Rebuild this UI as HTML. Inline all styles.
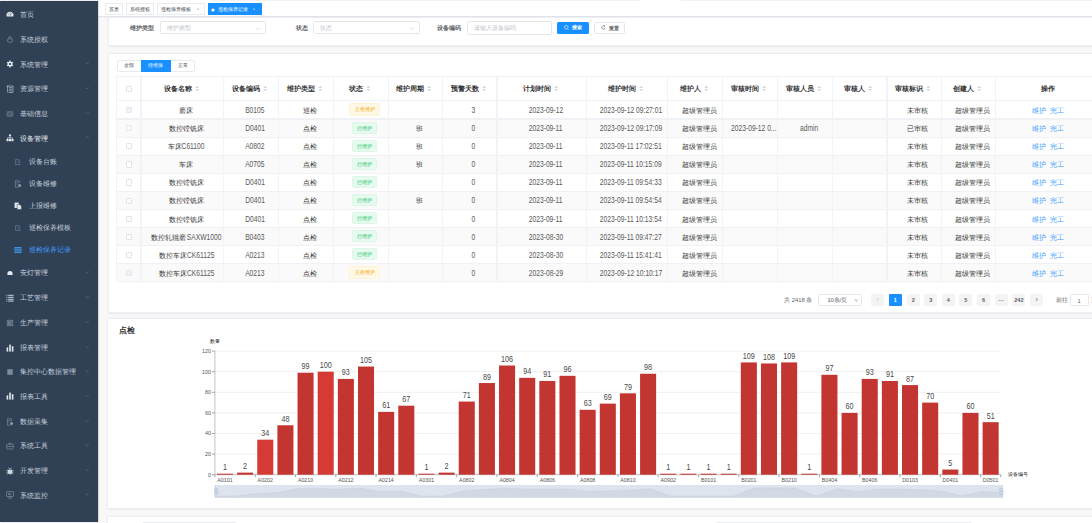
<!DOCTYPE html><html><head><meta charset="utf-8"><style>
*{box-sizing:border-box;margin:0;padding:0}
html,body{width:1092px;height:523px;overflow:hidden;background:#fff;font-family:"Liberation Sans",sans-serif;position:relative}
.abs{position:absolute}
#side{position:absolute;left:0;top:1px;width:98.3px;height:520.5px;background:#304156;z-index:5;box-shadow:0.5px 0 1.5px rgba(0,21,41,0.35)}
.mi{position:absolute;left:0;width:98px;height:20px;line-height:20px;color:#c6d0dc;font-size:7px;white-space:nowrap}
.mi .t{position:absolute;left:20px;top:0}
.mi.sub .t{left:28.8px}
.mi .ar{position:absolute;left:85.5px;top:8.3px;width:2.6px;height:2.6px;border-right:0.5px solid #5f6d80;border-bottom:0.5px solid #5f6d80;transform:rotate(45deg)}
.mi .ar.up{transform:rotate(-135deg);top:9.8px}
#main{position:absolute;left:98px;top:0;width:994px;height:523px;background:#f8f8f9}
.card{position:absolute;background:#fff;border-radius:1.5px;border:0.7px solid #eceef3;box-shadow:0 0.8px 1.6px rgba(0,0,0,0.06)}
.tag{position:absolute;top:3.25px;height:11.5px;border:0.5px solid #eaecf0;background:#fff;color:#3a3f4a;font-size:5.4px;line-height:10.5px;text-align:center;white-space:nowrap}
.lbl{position:absolute;font-size:6.2px;font-weight:bold;color:#606266;white-space:nowrap;line-height:8px}
.inp{position:absolute;height:13.2px;border:0.5px solid #e4e7ec;border-radius:1.5px;background:#fff;font-size:5.8px;color:#c0c4cc;line-height:12.2px;padding-left:5.6px;white-space:nowrap}
.btn{position:absolute;height:12.5px;border-radius:1.5px;font-size:5.5px;line-height:12px;text-align:center;white-space:nowrap}
.cell{position:absolute;font-size:6.9px;color:#383838;white-space:nowrap;text-align:center;line-height:9px}
.hcell{position:absolute;font-size:6.5px;color:#303133;font-weight:bold;white-space:nowrap;text-align:center;line-height:9px}
.st{display:inline-block;width:4.5px;height:7px;vertical-align:middle;margin-left:3px;position:relative;top:-0.5px}
.vl{position:absolute;width:1.1px;background:#f1f3f6}
.hl{position:absolute;height:1.1px;background:#eff1f4}
.ttag{position:absolute;height:12.3px;border:0.5px solid;border-radius:1.5px;font-size:5.4px;line-height:11.3px;text-align:center;white-space:nowrap}
.cb{position:absolute;width:6.2px;height:6.2px;border:0.5px solid #e0e3e9;border-radius:1px;background:#fff}
.pg{position:absolute;top:294px;width:13px;height:12.3px;background:#f4f4f5;border-radius:1px;font-size:5.5px;font-weight:bold;color:#606266;text-align:center;line-height:12.3px}
</style></head><body>
<div id="side">
<div class="mi" style="top:3.6500000000000004px;">
<svg class="abs" style="left:5.5px;top:5.7px" width="8" height="8" viewBox="0 0 8 8"><path d="M0.7 6.4A3.5 3.5 0 1 1 7.3 6.4z" fill="#e3e8ee"/><path d="M4 5.8L5.4 3.3M1.9 4.6h0.9M2.8 2.9l0.5 0.5M4 2.2v0.7M5.3 2.9l-0.5 0.5" stroke="#304156" stroke-width="0.55"/></svg>
<span class="t">首页</span>
</div>
<div class="mi" style="top:28.65px;">
<svg class="abs" style="left:5.5px;top:5.7px" width="8" height="8" viewBox="0 0 8 8"><rect x="1.6" y="3.8" width="4.8" height="3.4" rx="0.9" fill="none" stroke="#8d99a8" stroke-width="0.6"/><path d="M2.8 3.8V2.8a1.2 1.2 0 0 1 2.4 0v1" fill="none" stroke="#8d99a8" stroke-width="0.6"/></svg>
<span class="t">系统授权</span>
</div>
<div class="mi" style="top:53.65px;">
<svg class="abs" style="left:5.5px;top:5.7px" width="8" height="8" viewBox="0 0 8 8"><circle cx="4" cy="4" r="2.5" fill="#e3e8ee"/><path d="M4 0.6v6.8M1.05 2.3l5.9 3.4M1.05 5.7l5.9-3.4" stroke="#e3e8ee" stroke-width="1.3"/><circle cx="4" cy="4" r="1.1" fill="#304156"/></svg>
<span class="t">系统管理</span>
<svg class="abs" style="left:85px;top:7.75px" width="4.2" height="2.5" viewBox="0 0 4.2 2.5"><path d="M0.3 0.4L2.1 2.1 3.9 0.4" fill="none" stroke="#6d7a8b" stroke-width="0.5"/></svg>
</div>
<div class="mi" style="top:78.15px;">
<svg class="abs" style="left:5.5px;top:5.7px" width="8" height="8" viewBox="0 0 8 8"><path d="M0.8 1h6.2v6.5H2.5" fill="none" stroke="#c9d1dc" stroke-width="0.6"/><path d="M3 2.6h3M3 4.2h3M3 5.8h3M0.6 1.4h1.8M1.6 1.4v6" stroke="#c9d1dc" stroke-width="0.6"/></svg>
<span class="t">资源管理</span>
<svg class="abs" style="left:85px;top:7.75px" width="4.2" height="2.5" viewBox="0 0 4.2 2.5"><path d="M0.3 0.4L2.1 2.1 3.9 0.4" fill="none" stroke="#6d7a8b" stroke-width="0.5"/></svg>
</div>
<div class="mi" style="top:102.9px;">
<svg class="abs" style="left:5.5px;top:5.7px" width="8" height="8" viewBox="0 0 8 8"><rect x="1" y="1.6" width="6" height="4.8" rx="0.6" fill="#5d6b7d" stroke="#8d99a8" stroke-width="0.4" opacity="0.8"/><path d="M2 4.8l3.5-1.8" stroke="#304156" stroke-width="0.5"/></svg>
<span class="t">基础信息</span>
<svg class="abs" style="left:85px;top:7.75px" width="4.2" height="2.5" viewBox="0 0 4.2 2.5"><path d="M0.3 0.4L2.1 2.1 3.9 0.4" fill="none" stroke="#6d7a8b" stroke-width="0.5"/></svg>
</div>
<div class="mi" style="top:127.65px;color:#eef1f5">
<svg class="abs" style="left:5.5px;top:5.7px" width="8" height="8" viewBox="0 0 8 8"><circle cx="4" cy="1.4" r="1.1" fill="#e3e8ee"/><rect x="0.5" y="5" width="2.1" height="2.2" fill="#e3e8ee"/><rect x="2.95" y="5" width="2.1" height="2.2" fill="#e3e8ee"/><rect x="5.4" y="5" width="2.1" height="2.2" fill="#e3e8ee"/><path d="M4 2.4v2.6M1.5 5V3.8h5v1.2" fill="none" stroke="#e3e8ee" stroke-width="0.6"/></svg>
<span class="t">设备管理</span>
<svg class="abs" style="left:85px;top:7.75px" width="4.2" height="2.5" viewBox="0 0 4.2 2.5"><path d="M0.3 2.1L2.1 0.4 3.9 2.1" fill="none" stroke="#6d7a8b" stroke-width="0.5"/></svg>
</div>
<div class="mi sub" style="top:151.15px;">
<svg class="abs" style="left:14.2px;top:5.7px" width="8" height="8" viewBox="0 0 8 8"><path d="M5.8 3.5v3H1.6V1.6h3" fill="none" stroke="#8d99a8" stroke-width="0.5"/><path d="M3.2 4.6l3-3" stroke="#8d99a8" stroke-width="0.6"/></svg>
<span class="t">设备台账</span>
</div>
<div class="mi sub" style="top:173.15px;">
<svg class="abs" style="left:14.2px;top:5.7px" width="8" height="8" viewBox="0 0 8 8"><path d="M1.4 0.8h4v2.2M1.4 0.8v6.4h3" fill="none" stroke="#8d99a8" stroke-width="0.6"/><path d="M2.4 2.5h2M2.4 4h1.5" stroke="#8d99a8" stroke-width="0.5"/><circle cx="5.6" cy="5.6" r="1.5" fill="#8d99a8"/></svg>
<span class="t">设备维修</span>
</div>
<div class="mi sub" style="top:194.9px;">
<svg class="abs" style="left:14.2px;top:5.7px" width="8" height="8" viewBox="0 0 8 8"><rect x="0.6" y="0.6" width="4.2" height="5.4" fill="#e3e8ee"/><path d="M3.2 2.4h2.6l1.6 1.6v3.6H3.2z" fill="#e3e8ee" stroke="#304156" stroke-width="0.5"/></svg>
<span class="t">上报维修</span>
</div>
<div class="mi sub" style="top:217.4px;">
<svg class="abs" style="left:14.2px;top:5.7px" width="8" height="8" viewBox="0 0 8 8"><path d="M5.8 3.5v3H1.6V1.6h3" fill="none" stroke="#8d99a8" stroke-width="0.5"/><path d="M3.2 4.6l3-3" stroke="#8d99a8" stroke-width="0.6"/></svg>
<span class="t">巡检保养模板</span>
</div>
<div class="mi sub" style="top:239.4px;color:#409EFF">
<svg class="abs" style="left:14.2px;top:5.7px" width="8" height="8" viewBox="0 0 8 8"><rect x="1" y="1.4" width="6" height="5.2" fill="none" stroke="#409EFF" stroke-width="0.8"/><path d="M1 3.2h6M1 4.8h6M3 1.4v5.2M5 1.4v5.2" stroke="#409EFF" stroke-width="0.6"/></svg>
<span class="t">巡检保养记录</span>
</div>
<div class="mi" style="top:262.4px;">
<svg class="abs" style="left:5.5px;top:5.7px" width="8" height="8" viewBox="0 0 8 8"><path d="M1.4 6V4.6a2.6 2.6 0 0 1 5.2 0V6z" fill="#e3e8ee"/><path d="M1.3 1.6l0.6 0.6M6.7 1.6l-0.6 0.6" stroke="#8d99a8" stroke-width="0.4"/></svg>
<span class="t">安灯管理</span>
<svg class="abs" style="left:85px;top:7.75px" width="4.2" height="2.5" viewBox="0 0 4.2 2.5"><path d="M0.3 0.4L2.1 2.1 3.9 0.4" fill="none" stroke="#6d7a8b" stroke-width="0.5"/></svg>
</div>
<div class="mi" style="top:287.4px;">
<svg class="abs" style="left:5.5px;top:5.7px" width="8" height="8" viewBox="0 0 8 8"><path d="M0.4 1.3h0.9M2.2 1.3h5.4M0.4 3.3h0.9M2.2 3.3h5.4M0.4 5.3h0.9M2.2 5.3h5.4M0.4 7.1h0.9M2.2 7.1h5.4" stroke="#e3e8ee" stroke-width="0.9"/></svg>
<span class="t">工艺管理</span>
<svg class="abs" style="left:85px;top:7.75px" width="4.2" height="2.5" viewBox="0 0 4.2 2.5"><path d="M0.3 0.4L2.1 2.1 3.9 0.4" fill="none" stroke="#6d7a8b" stroke-width="0.5"/></svg>
</div>
<div class="mi" style="top:311.9px;">
<svg class="abs" style="left:5.5px;top:5.7px" width="8" height="8" viewBox="0 0 8 8"><rect x="1.1" y="1.1" width="5.8" height="5.8" fill="#56667a" stroke="#8d99a8" stroke-width="0.4"/><path d="M2.6 2.2v3.6M2.8 4l2.5-1.8M2.8 4l2.5 2.2" stroke="#8d99a8" stroke-width="0.5"/></svg>
<span class="t">生产管理</span>
<svg class="abs" style="left:85px;top:7.75px" width="4.2" height="2.5" viewBox="0 0 4.2 2.5"><path d="M0.3 0.4L2.1 2.1 3.9 0.4" fill="none" stroke="#6d7a8b" stroke-width="0.5"/></svg>
</div>
<div class="mi" style="top:336.9px;">
<svg class="abs" style="left:5.5px;top:5.7px" width="8" height="8" viewBox="0 0 8 8"><rect x="0.6" y="3.4" width="1.6" height="4.2" fill="#e3e8ee"/><rect x="3.2" y="0.6" width="1.6" height="7" fill="#e3e8ee"/><rect x="5.8" y="2.2" width="1.6" height="5.4" fill="#e3e8ee"/></svg>
<span class="t">报表管理</span>
<svg class="abs" style="left:85px;top:7.75px" width="4.2" height="2.5" viewBox="0 0 4.2 2.5"><path d="M0.3 0.4L2.1 2.1 3.9 0.4" fill="none" stroke="#6d7a8b" stroke-width="0.5"/></svg>
</div>
<div class="mi" style="top:361.4px;">
<svg class="abs" style="left:5.5px;top:5.7px" width="8" height="8" viewBox="0 0 8 8"><rect x="1.3" y="1.2" width="5.4" height="5.6" rx="0.4" fill="#8290a2"/><path d="M1.3 3h5.4M1.3 5h5.4" stroke="#6a788a" stroke-width="0.4"/></svg>
<span class="t">集控中心数据管理</span>
<svg class="abs" style="left:85px;top:7.75px" width="4.2" height="2.5" viewBox="0 0 4.2 2.5"><path d="M0.3 0.4L2.1 2.1 3.9 0.4" fill="none" stroke="#6d7a8b" stroke-width="0.5"/></svg>
</div>
<div class="mi" style="top:385.79999999999995px;">
<svg class="abs" style="left:5.5px;top:5.7px" width="8" height="8" viewBox="0 0 8 8"><rect x="0.6" y="3.4" width="1.6" height="4.2" fill="#e3e8ee"/><rect x="3.2" y="0.6" width="1.6" height="7" fill="#e3e8ee"/><rect x="5.8" y="2.2" width="1.6" height="5.4" fill="#e3e8ee"/></svg>
<span class="t">报表工具</span>
<svg class="abs" style="left:85px;top:7.75px" width="4.2" height="2.5" viewBox="0 0 4.2 2.5"><path d="M0.3 0.4L2.1 2.1 3.9 0.4" fill="none" stroke="#6d7a8b" stroke-width="0.5"/></svg>
</div>
<div class="mi" style="top:410.9px;">
<svg class="abs" style="left:5.5px;top:5.7px" width="8" height="8" viewBox="0 0 8 8"><path d="M1.4 0.8h4v2.2M1.4 0.8v6.4h3" fill="none" stroke="#8d99a8" stroke-width="0.6"/><path d="M2.4 2.5h2M2.4 4h1.5" stroke="#8d99a8" stroke-width="0.5"/><circle cx="5.6" cy="5.6" r="1.5" fill="#8d99a8"/></svg>
<span class="t">数据采集</span>
<svg class="abs" style="left:85px;top:7.75px" width="4.2" height="2.5" viewBox="0 0 4.2 2.5"><path d="M0.3 0.4L2.1 2.1 3.9 0.4" fill="none" stroke="#6d7a8b" stroke-width="0.5"/></svg>
</div>
<div class="mi" style="top:435.29999999999995px;">
<svg class="abs" style="left:5.5px;top:5.7px" width="8" height="8" viewBox="0 0 8 8"><rect x="0.7" y="2.2" width="6.6" height="4.8" rx="0.8" fill="none" stroke="#8d99a8" stroke-width="0.6"/><path d="M2.8 2.2V1.2h2.4v1M0.7 4.5h6.6M4 3.8v1.4" fill="none" stroke="#8d99a8" stroke-width="0.5"/></svg>
<span class="t">系统工具</span>
<svg class="abs" style="left:85px;top:7.75px" width="4.2" height="2.5" viewBox="0 0 4.2 2.5"><path d="M0.3 0.4L2.1 2.1 3.9 0.4" fill="none" stroke="#6d7a8b" stroke-width="0.5"/></svg>
</div>
<div class="mi" style="top:460.2px;">
<svg class="abs" style="left:5.5px;top:5.7px" width="8" height="8" viewBox="0 0 8 8"><ellipse cx="4" cy="4.8" rx="2.2" ry="2.6" fill="#e3e8ee"/><path d="M0.4 3.4h7.2M0.4 5.2h7.2M0.8 7.4l1.4-1.2M7.2 7.4l-1.4-1.2M2.6 0.6l0.9 1.4M5.4 0.6l-0.9 1.4" stroke="#e3e8ee" stroke-width="0.6"/><path d="M4 2.6v4.8" stroke="#304156" stroke-width="0.3"/></svg>
<span class="t">开发管理</span>
<svg class="abs" style="left:85px;top:7.75px" width="4.2" height="2.5" viewBox="0 0 4.2 2.5"><path d="M0.3 0.4L2.1 2.1 3.9 0.4" fill="none" stroke="#6d7a8b" stroke-width="0.5"/></svg>
</div>
<div class="mi" style="top:484.7px;">
<svg class="abs" style="left:5.5px;top:5.7px" width="8" height="8" viewBox="0 0 8 8"><rect x="0.7" y="0.8" width="6.6" height="4.6" fill="none" stroke="#8d99a8" stroke-width="0.6"/><path d="M4 5.4v1.4M2 7.2h4M2 2.4h2.2M2 3.6h3.4" stroke="#8d99a8" stroke-width="0.6"/></svg>
<span class="t">系统监控</span>
<svg class="abs" style="left:85px;top:7.75px" width="4.2" height="2.5" viewBox="0 0 4.2 2.5"><path d="M0.3 0.4L2.1 2.1 3.9 0.4" fill="none" stroke="#6d7a8b" stroke-width="0.5"/></svg>
</div>
</div>
<div id="main">
<div class="abs" style="left:0;top:0;width:994px;height:16.8px;background:#fff;border-bottom:0.8px solid #e3e6ec;box-shadow:0 0.5px 1.5px rgba(0,21,41,0.06)"></div>
<div class="tag" style="left:7.4px;width:17.8px;"></div>
<div class="abs" style="left:11.2px;top:4.6px;font-size:5.4px;line-height:8px;color:#3a3f4a;white-space:nowrap">首页</div>
<div class="tag" style="left:27.7px;width:28.8px;"></div>
<div class="abs" style="left:32px;top:4.6px;font-size:5.4px;line-height:8px;color:#3a3f4a;white-space:nowrap">系统授权</div>
<div class="tag" style="left:59.3px;width:47.8px;"></div>
<div class="abs" style="left:62.8px;top:4.6px;font-size:5.4px;line-height:8px;color:#3a3f4a;white-space:nowrap">巡检保养模板</div>
<svg class="abs" style="left:98.50px;top:7.8px" width="2.4" height="2.4" viewBox="0 0 2.4 2.4"><path d="M0.4 0.4L2 2M2 0.4L0.4 2" stroke="#888" stroke-width="0.45"/></svg>
<div class="tag" style="left:109.6px;width:54.0px;background:#1890ff;border-color:#1890ff;"></div>
<div class="abs" style="left:119.5px;top:4.6px;font-size:5.4px;line-height:8px;color:#fff;white-space:nowrap">巡检保养记录</div>
<svg class="abs" style="left:113.40px;top:7.75px" width="4" height="4" viewBox="0 0 4 4"><circle cx="2" cy="2" r="1.6" fill="#fff"/></svg>
<svg class="abs" style="left:155.00px;top:7.8px" width="2.4" height="2.4" viewBox="0 0 2.4 2.4"><path d="M0.4 0.4L2 2M2 0.4L0.4 2" stroke="#fff" stroke-width="0.45"/></svg>
<div class="abs" style="left:115px;top:0;width:427px;height:1.3px;background:#f2f2f3"></div>
<div class="abs" style="left:583px;top:0;width:411px;height:1.3px;background:#f2f2f3"></div>
<div class="card" style="left:9.5px;top:17px;width:1000px;height:28.5px"></div>
<div class="lbl" style="left:31.8px;top:24px">维护类型</div>
<div class="inp" style="left:62.3px;top:21.3px;width:105.7px">维护类型</div>
<div class="lbl" style="left:198.3px;top:24px">状态</div>
<div class="inp" style="left:215.2px;top:21.3px;width:106.4px">状态</div>
<svg class="abs" style="left:157.30px;top:26.5px" width="5.6" height="3.4" viewBox="0 0 5.6 3.4"><path d="M0.4 0.5L2.8 2.8 5.2 0.5" fill="none" stroke="#b8bcc4" stroke-width="0.5"/></svg>
<svg class="abs" style="left:311.10px;top:26.5px" width="5.6" height="3.4" viewBox="0 0 5.6 3.4"><path d="M0.4 0.5L2.8 2.8 5.2 0.5" fill="none" stroke="#b8bcc4" stroke-width="0.5"/></svg>
<div class="lbl" style="left:339.1px;top:24px">设备编码</div>
<div class="inp" style="left:369.1px;top:21.4px;width:85.4px">请输入设备编码</div>
<div class="btn" style="left:459px;top:21.9px;width:31.8px;height:12.4px;background:#1890ff;color:#fff;font-weight:bold;text-align:left;padding-left:14.6px;font-size:5.4px;line-height:10.6px">搜索</div>
<svg class="abs" style="left:466.2px;top:25.3px" width="5" height="5" viewBox="0 0 5 5"><circle cx="2.3" cy="2.3" r="1.8" fill="none" stroke="#fff" stroke-width="0.6"/><path d="M3.6 3.6L4.6 4.6" stroke="#fff" stroke-width="0.6"/></svg>
<div class="btn" style="left:495.7px;top:21.9px;width:31.8px;height:12.4px;background:#fff;border:0.5px solid #e4e7ed;color:#707070;font-weight:bold;text-align:left;padding-left:14.3px;font-size:5.4px;line-height:10.6px">重置</div>
<svg class="abs" style="left:503.2px;top:25.3px" width="5" height="5" viewBox="0 0 5 5"><path d="M4.1 2.5A1.7 1.7 0 1 1 3.4 1.1" fill="none" stroke="#606266" stroke-width="0.6"/><path d="M2.9 0.4L4 1.1 3 1.9" fill="none" stroke="#606266" stroke-width="0.5"/></svg>
<div class="card" style="left:9.7px;top:53px;width:1000px;height:260.2px"></div>
<div class="abs" style="left:18.7px;top:59.7px;width:78.5px;height:11.9px;border:0.5px solid #e8eaee;border-radius:1.5px;background:#fff"></div>
<div class="abs" style="left:43.1px;top:59.7px;width:29.7px;height:11.9px;background:#1890ff"></div>
<div class="abs" style="left:18.7px;top:60.1px;width:24.4px;height:11.9px;line-height:11.9px;text-align:center;font-size:5.2px;color:#3f3f3f">全部</div>
<div class="abs" style="left:43.1px;top:60.1px;width:29.7px;height:11.9px;line-height:11.9px;text-align:center;font-size:5.2px;color:#fff">待维保</div>
<div class="abs" style="left:72.8px;top:60.1px;width:24.4px;height:11.9px;line-height:11.9px;text-align:center;font-size:5.2px;color:#3f3f3f">正常</div>
<div class="abs" style="left:18.7px;top:118.68px;width:990px;height:18.08px;background:#fafafa"></div>
<div class="abs" style="left:18.7px;top:154.84px;width:990px;height:18.08px;background:#fafafa"></div>
<div class="abs" style="left:18.7px;top:191.00px;width:990px;height:18.08px;background:#fafafa"></div>
<div class="abs" style="left:18.7px;top:227.16px;width:990px;height:18.08px;background:#fafafa"></div>
<div class="abs" style="left:18.7px;top:263.32px;width:990px;height:18.08px;background:#fafafa"></div>
<div class="hl" style="left:18.7px;top:76.10px;width:990px"></div>
<div class="hl" style="left:18.7px;top:100.40px;width:990px"></div>
<div class="hl" style="left:18.7px;top:118.48px;width:990px"></div>
<div class="hl" style="left:18.7px;top:136.56px;width:990px"></div>
<div class="hl" style="left:18.7px;top:154.64px;width:990px"></div>
<div class="hl" style="left:18.7px;top:172.72px;width:990px"></div>
<div class="hl" style="left:18.7px;top:190.80px;width:990px"></div>
<div class="hl" style="left:18.7px;top:208.88px;width:990px"></div>
<div class="hl" style="left:18.7px;top:226.96px;width:990px"></div>
<div class="hl" style="left:18.7px;top:245.04px;width:990px"></div>
<div class="hl" style="left:18.7px;top:263.12px;width:990px"></div>
<div class="hl" style="left:18.7px;top:281.20px;width:990px"></div>
<div class="vl" style="left:17.75px;top:76.3px;height:205.10px"></div>
<div class="vl" style="left:42.45px;top:76.3px;height:205.10px"></div>
<div class="vl" style="left:125.35px;top:76.3px;height:205.10px"></div>
<div class="vl" style="left:180.05px;top:76.3px;height:205.10px"></div>
<div class="vl" style="left:234.65px;top:76.3px;height:205.10px"></div>
<div class="vl" style="left:289.65px;top:76.3px;height:205.10px"></div>
<div class="vl" style="left:343.65px;top:76.3px;height:205.10px"></div>
<div class="vl" style="left:398.45px;top:76.3px;height:205.10px"></div>
<div class="vl" style="left:487.75px;top:76.3px;height:205.10px"></div>
<div class="vl" style="left:569.35px;top:76.3px;height:205.10px"></div>
<div class="vl" style="left:624.05px;top:76.3px;height:205.10px"></div>
<div class="vl" style="left:679.35px;top:76.3px;height:205.10px"></div>
<div class="vl" style="left:733.65px;top:76.3px;height:205.10px"></div>
<div class="vl" style="left:788.45px;top:76.3px;height:205.10px"></div>
<div class="vl" style="left:842.55px;top:76.3px;height:205.10px"></div>
<div class="vl" style="left:897.25px;top:76.3px;height:205.10px"></div>
<div class="vl" style="left:1000.05px;top:76.3px;height:205.10px"></div>
<div class="cb" style="left:27.9px;top:85.7px"></div>
<div class="hcell" style="left:33.35px;width:100px;top:83.95px">设备名称<svg class="st" viewBox="0 0 4.5 7"><path d="M0.3 3.1L2.25 0.8 4.2 3.1z M0.3 3.9L2.25 6.2 4.2 3.9z" fill="#d3d7de"/></svg></div>
<div class="hcell" style="left:102.15px;width:100px;top:83.95px">设备编码<svg class="st" viewBox="0 0 4.5 7"><path d="M0.3 3.1L2.25 0.8 4.2 3.1z M0.3 3.9L2.25 6.2 4.2 3.9z" fill="#d3d7de"/></svg></div>
<div class="hcell" style="left:156.80px;width:100px;top:83.95px">维护类型<svg class="st" viewBox="0 0 4.5 7"><path d="M0.3 3.1L2.25 0.8 4.2 3.1z M0.3 3.9L2.25 6.2 4.2 3.9z" fill="#d3d7de"/></svg></div>
<div class="hcell" style="left:211.60px;width:100px;top:83.95px">状态<svg class="st" viewBox="0 0 4.5 7"><path d="M0.3 3.1L2.25 0.8 4.2 3.1z M0.3 3.9L2.25 6.2 4.2 3.9z" fill="#d3d7de"/></svg></div>
<div class="hcell" style="left:266.10px;width:100px;top:83.95px">维护周期<svg class="st" viewBox="0 0 4.5 7"><path d="M0.3 3.1L2.25 0.8 4.2 3.1z M0.3 3.9L2.25 6.2 4.2 3.9z" fill="#d3d7de"/></svg></div>
<div class="hcell" style="left:320.50px;width:100px;top:83.95px">预警天数<svg class="st" viewBox="0 0 4.5 7"><path d="M0.3 3.1L2.25 0.8 4.2 3.1z M0.3 3.9L2.25 6.2 4.2 3.9z" fill="#d3d7de"/></svg></div>
<div class="hcell" style="left:392.55px;width:100px;top:83.95px">计划时间<svg class="st" viewBox="0 0 4.5 7"><path d="M0.3 3.1L2.25 0.8 4.2 3.1z M0.3 3.9L2.25 6.2 4.2 3.9z" fill="#d3d7de"/></svg></div>
<div class="hcell" style="left:478.00px;width:100px;top:83.95px">维护时间<svg class="st" viewBox="0 0 4.5 7"><path d="M0.3 3.1L2.25 0.8 4.2 3.1z M0.3 3.9L2.25 6.2 4.2 3.9z" fill="#d3d7de"/></svg></div>
<div class="hcell" style="left:546.15px;width:100px;top:83.95px">维护人<svg class="st" viewBox="0 0 4.5 7"><path d="M0.3 3.1L2.25 0.8 4.2 3.1z M0.3 3.9L2.25 6.2 4.2 3.9z" fill="#d3d7de"/></svg></div>
<div class="hcell" style="left:601.15px;width:100px;top:83.95px">审核时间<svg class="st" viewBox="0 0 4.5 7"><path d="M0.3 3.1L2.25 0.8 4.2 3.1z M0.3 3.9L2.25 6.2 4.2 3.9z" fill="#d3d7de"/></svg></div>
<div class="hcell" style="left:655.95px;width:100px;top:83.95px">审核人员<svg class="st" viewBox="0 0 4.5 7"><path d="M0.3 3.1L2.25 0.8 4.2 3.1z M0.3 3.9L2.25 6.2 4.2 3.9z" fill="#d3d7de"/></svg></div>
<div class="hcell" style="left:710.50px;width:100px;top:83.95px">审核人<svg class="st" viewBox="0 0 4.5 7"><path d="M0.3 3.1L2.25 0.8 4.2 3.1z M0.3 3.9L2.25 6.2 4.2 3.9z" fill="#d3d7de"/></svg></div>
<div class="hcell" style="left:764.95px;width:100px;top:83.95px">审核标识<svg class="st" viewBox="0 0 4.5 7"><path d="M0.3 3.1L2.25 0.8 4.2 3.1z M0.3 3.9L2.25 6.2 4.2 3.9z" fill="#d3d7de"/></svg></div>
<div class="hcell" style="left:819.35px;width:100px;top:83.95px">创建人<svg class="st" viewBox="0 0 4.5 7"><path d="M0.3 3.1L2.25 0.8 4.2 3.1z M0.3 3.9L2.25 6.2 4.2 3.9z" fill="#d3d7de"/></svg></div>
<div class="hcell" style="left:899.70px;width:100px;top:83.95px">操作</div>
<div class="cb" style="left:27.9px;top:107.14px;background:#edf2fc;border-color:#e4e7ed"></div>
<div class="cell" style="left:38.35px;width:100px;top:106.04px">磨床</div>
<div class="cell" style="left:107.15px;width:100px;top:106.04px"><span style="display:inline-block;font-size:8.2px;transform:scaleX(0.82);margin:0 -2.13px;white-space:pre;color:#5a5a5a">B0105</span></div>
<div class="cell" style="left:161.80px;width:100px;top:106.04px">巡检</div>
<div class="ttag" style="left:251.10px;top:103.49px;width:31px;background:#fff8e6;border-color:#fff3d6;color:#f5a300">正在维护</div>
<div class="cell" style="left:325.50px;width:100px;top:106.04px"><span style="display:inline-block;font-size:8.2px;transform:scaleX(0.82);margin:0 -0.41px;white-space:pre;color:#5a5a5a">3</span></div>
<div class="cell" style="left:397.55px;width:100px;top:106.04px"><span style="display:inline-block;font-size:8.2px;transform:scaleX(0.82);margin:0 -3.78px;white-space:pre;color:#5a5a5a">2023-09-12</span></div>
<div class="cell" style="left:483.00px;width:100px;top:106.04px"><span style="display:inline-block;font-size:8.2px;transform:scaleX(0.82);margin:0 -6.85px;white-space:pre;color:#5a5a5a">2023-09-12 09:27:01</span></div>
<div class="cell" style="left:551.15px;width:100px;top:106.04px">超级管理员</div>
<div class="cell" style="left:769.95px;width:100px;top:106.04px">未审核</div>
<div class="cell" style="left:824.35px;width:100px;top:106.04px">超级管理员</div>
<div class="cell" style="left:899.70px;width:100px;top:106.04px;color:#409EFF">维护&nbsp;&nbsp;完工</div>
<div class="cb" style="left:27.9px;top:125.22px;"></div>
<div class="cell" style="left:38.35px;width:100px;top:124.12px">数控镗铣床</div>
<div class="cell" style="left:107.15px;width:100px;top:124.12px"><span style="display:inline-block;font-size:8.2px;transform:scaleX(0.82);margin:0 -2.17px;white-space:pre;color:#5a5a5a">D0401</span></div>
<div class="cell" style="left:161.80px;width:100px;top:124.12px">点检</div>
<div class="ttag" style="left:254.10px;top:121.57px;width:25.2px;background:#e7faf0;border-color:#dcf7e8;color:#13c462">已维护</div>
<div class="cell" style="left:271.10px;width:100px;top:124.12px">班</div>
<div class="cell" style="left:325.50px;width:100px;top:124.12px"><span style="display:inline-block;font-size:8.2px;transform:scaleX(0.82);margin:0 -0.41px;white-space:pre;color:#5a5a5a">0</span></div>
<div class="cell" style="left:397.55px;width:100px;top:124.12px"><span style="display:inline-block;font-size:8.2px;transform:scaleX(0.82);margin:0 -3.72px;white-space:pre;color:#5a5a5a">2023-09-11</span></div>
<div class="cell" style="left:483.00px;width:100px;top:124.12px"><span style="display:inline-block;font-size:8.2px;transform:scaleX(0.82);margin:0 -6.85px;white-space:pre;color:#5a5a5a">2023-09-12 09:17:09</span></div>
<div class="cell" style="left:551.15px;width:100px;top:124.12px">超级管理员</div>
<div class="cell" style="left:606.15px;width:100px;top:124.12px"><span style="display:inline-block;font-size:8.2px;transform:scaleX(0.82);margin:0 -5.01px;white-space:pre;color:#5a5a5a">2023-09-12 0...</span></div>
<div class="cell" style="left:660.95px;width:100px;top:124.12px"><span style="display:inline-block;font-size:8.2px;transform:scaleX(0.82);margin:0 -2.01px;white-space:pre;color:#5a5a5a">admin</span></div>
<div class="cell" style="left:769.95px;width:100px;top:124.12px">已审核</div>
<div class="cell" style="left:824.35px;width:100px;top:124.12px">超级管理员</div>
<div class="cell" style="left:899.70px;width:100px;top:124.12px;color:#409EFF">维护&nbsp;&nbsp;完工</div>
<div class="cb" style="left:27.9px;top:143.30px;"></div>
<div class="cell" style="left:38.35px;width:100px;top:142.20px">车床<span style="display:inline-block;font-size:8.2px;transform:scaleX(0.82);margin:0 -2.53px;white-space:pre;color:#5a5a5a">C61100</span></div>
<div class="cell" style="left:107.15px;width:100px;top:142.20px"><span style="display:inline-block;font-size:8.2px;transform:scaleX(0.82);margin:0 -2.13px;white-space:pre;color:#5a5a5a">A0802</span></div>
<div class="cell" style="left:161.80px;width:100px;top:142.20px">点检</div>
<div class="ttag" style="left:254.10px;top:139.65px;width:25.2px;background:#e7faf0;border-color:#dcf7e8;color:#13c462">已维护</div>
<div class="cell" style="left:271.10px;width:100px;top:142.20px">班</div>
<div class="cell" style="left:325.50px;width:100px;top:142.20px"><span style="display:inline-block;font-size:8.2px;transform:scaleX(0.82);margin:0 -0.41px;white-space:pre;color:#5a5a5a">0</span></div>
<div class="cell" style="left:397.55px;width:100px;top:142.20px"><span style="display:inline-block;font-size:8.2px;transform:scaleX(0.82);margin:0 -3.72px;white-space:pre;color:#5a5a5a">2023-09-11</span></div>
<div class="cell" style="left:483.00px;width:100px;top:142.20px"><span style="display:inline-block;font-size:8.2px;transform:scaleX(0.82);margin:0 -6.80px;white-space:pre;color:#5a5a5a">2023-09-11 17:02:51</span></div>
<div class="cell" style="left:551.15px;width:100px;top:142.20px">超级管理员</div>
<div class="cell" style="left:769.95px;width:100px;top:142.20px">未审核</div>
<div class="cell" style="left:824.35px;width:100px;top:142.20px">超级管理员</div>
<div class="cell" style="left:899.70px;width:100px;top:142.20px;color:#409EFF">维护&nbsp;&nbsp;完工</div>
<div class="cb" style="left:27.9px;top:161.38px;"></div>
<div class="cell" style="left:38.35px;width:100px;top:160.28px">车床</div>
<div class="cell" style="left:107.15px;width:100px;top:160.28px"><span style="display:inline-block;font-size:8.2px;transform:scaleX(0.82);margin:0 -2.13px;white-space:pre;color:#5a5a5a">A0705</span></div>
<div class="cell" style="left:161.80px;width:100px;top:160.28px">点检</div>
<div class="ttag" style="left:254.10px;top:157.73px;width:25.2px;background:#e7faf0;border-color:#dcf7e8;color:#13c462">已维护</div>
<div class="cell" style="left:271.10px;width:100px;top:160.28px">班</div>
<div class="cell" style="left:325.50px;width:100px;top:160.28px"><span style="display:inline-block;font-size:8.2px;transform:scaleX(0.82);margin:0 -0.41px;white-space:pre;color:#5a5a5a">0</span></div>
<div class="cell" style="left:397.55px;width:100px;top:160.28px"><span style="display:inline-block;font-size:8.2px;transform:scaleX(0.82);margin:0 -3.72px;white-space:pre;color:#5a5a5a">2023-09-11</span></div>
<div class="cell" style="left:483.00px;width:100px;top:160.28px"><span style="display:inline-block;font-size:8.2px;transform:scaleX(0.82);margin:0 -6.80px;white-space:pre;color:#5a5a5a">2023-09-11 10:15:09</span></div>
<div class="cell" style="left:551.15px;width:100px;top:160.28px">超级管理员</div>
<div class="cell" style="left:769.95px;width:100px;top:160.28px">未审核</div>
<div class="cell" style="left:824.35px;width:100px;top:160.28px">超级管理员</div>
<div class="cell" style="left:899.70px;width:100px;top:160.28px;color:#409EFF">维护&nbsp;&nbsp;完工</div>
<div class="cb" style="left:27.9px;top:179.46px;"></div>
<div class="cell" style="left:38.35px;width:100px;top:178.36px">数控镗铣床</div>
<div class="cell" style="left:107.15px;width:100px;top:178.36px"><span style="display:inline-block;font-size:8.2px;transform:scaleX(0.82);margin:0 -2.17px;white-space:pre;color:#5a5a5a">D0401</span></div>
<div class="cell" style="left:161.80px;width:100px;top:178.36px">点检</div>
<div class="ttag" style="left:254.10px;top:175.81px;width:25.2px;background:#e7faf0;border-color:#dcf7e8;color:#13c462">已维护</div>
<div class="cell" style="left:325.50px;width:100px;top:178.36px"><span style="display:inline-block;font-size:8.2px;transform:scaleX(0.82);margin:0 -0.41px;white-space:pre;color:#5a5a5a">0</span></div>
<div class="cell" style="left:397.55px;width:100px;top:178.36px"><span style="display:inline-block;font-size:8.2px;transform:scaleX(0.82);margin:0 -3.72px;white-space:pre;color:#5a5a5a">2023-09-11</span></div>
<div class="cell" style="left:483.00px;width:100px;top:178.36px"><span style="display:inline-block;font-size:8.2px;transform:scaleX(0.82);margin:0 -6.80px;white-space:pre;color:#5a5a5a">2023-09-11 09:54:33</span></div>
<div class="cell" style="left:551.15px;width:100px;top:178.36px">超级管理员</div>
<div class="cell" style="left:769.95px;width:100px;top:178.36px">未审核</div>
<div class="cell" style="left:824.35px;width:100px;top:178.36px">超级管理员</div>
<div class="cell" style="left:899.70px;width:100px;top:178.36px;color:#409EFF">维护&nbsp;&nbsp;完工</div>
<div class="cb" style="left:27.9px;top:197.54px;"></div>
<div class="cell" style="left:38.35px;width:100px;top:196.44px">数控镗铣床</div>
<div class="cell" style="left:107.15px;width:100px;top:196.44px"><span style="display:inline-block;font-size:8.2px;transform:scaleX(0.82);margin:0 -2.17px;white-space:pre;color:#5a5a5a">D0401</span></div>
<div class="cell" style="left:161.80px;width:100px;top:196.44px">点检</div>
<div class="ttag" style="left:254.10px;top:193.89px;width:25.2px;background:#e7faf0;border-color:#dcf7e8;color:#13c462">已维护</div>
<div class="cell" style="left:271.10px;width:100px;top:196.44px">班</div>
<div class="cell" style="left:325.50px;width:100px;top:196.44px"><span style="display:inline-block;font-size:8.2px;transform:scaleX(0.82);margin:0 -0.41px;white-space:pre;color:#5a5a5a">0</span></div>
<div class="cell" style="left:397.55px;width:100px;top:196.44px"><span style="display:inline-block;font-size:8.2px;transform:scaleX(0.82);margin:0 -3.72px;white-space:pre;color:#5a5a5a">2023-09-11</span></div>
<div class="cell" style="left:483.00px;width:100px;top:196.44px"><span style="display:inline-block;font-size:8.2px;transform:scaleX(0.82);margin:0 -6.80px;white-space:pre;color:#5a5a5a">2023-09-11 09:54:54</span></div>
<div class="cell" style="left:551.15px;width:100px;top:196.44px">超级管理员</div>
<div class="cell" style="left:769.95px;width:100px;top:196.44px">未审核</div>
<div class="cell" style="left:824.35px;width:100px;top:196.44px">超级管理员</div>
<div class="cell" style="left:899.70px;width:100px;top:196.44px;color:#409EFF">维护&nbsp;&nbsp;完工</div>
<div class="cb" style="left:27.9px;top:215.62px;"></div>
<div class="cell" style="left:38.35px;width:100px;top:214.52px">数控镗铣床</div>
<div class="cell" style="left:107.15px;width:100px;top:214.52px"><span style="display:inline-block;font-size:8.2px;transform:scaleX(0.82);margin:0 -2.17px;white-space:pre;color:#5a5a5a">D0401</span></div>
<div class="cell" style="left:161.80px;width:100px;top:214.52px">点检</div>
<div class="ttag" style="left:254.10px;top:211.97px;width:25.2px;background:#e7faf0;border-color:#dcf7e8;color:#13c462">已维护</div>
<div class="cell" style="left:325.50px;width:100px;top:214.52px"><span style="display:inline-block;font-size:8.2px;transform:scaleX(0.82);margin:0 -0.41px;white-space:pre;color:#5a5a5a">0</span></div>
<div class="cell" style="left:397.55px;width:100px;top:214.52px"><span style="display:inline-block;font-size:8.2px;transform:scaleX(0.82);margin:0 -3.72px;white-space:pre;color:#5a5a5a">2023-09-11</span></div>
<div class="cell" style="left:483.00px;width:100px;top:214.52px"><span style="display:inline-block;font-size:8.2px;transform:scaleX(0.82);margin:0 -6.80px;white-space:pre;color:#5a5a5a">2023-09-11 10:13:54</span></div>
<div class="cell" style="left:551.15px;width:100px;top:214.52px">超级管理员</div>
<div class="cell" style="left:769.95px;width:100px;top:214.52px">未审核</div>
<div class="cell" style="left:824.35px;width:100px;top:214.52px">超级管理员</div>
<div class="cell" style="left:899.70px;width:100px;top:214.52px;color:#409EFF">维护&nbsp;&nbsp;完工</div>
<div class="cb" style="left:27.9px;top:233.70px;"></div>
<div class="cell" style="left:38.35px;width:100px;top:232.60px">数控轧辊磨<span style="display:inline-block;font-size:8.2px;transform:scaleX(0.82);margin:0 -3.82px;white-space:pre;color:#5a5a5a">SAXW1000</span></div>
<div class="cell" style="left:107.15px;width:100px;top:232.60px"><span style="display:inline-block;font-size:8.2px;transform:scaleX(0.82);margin:0 -2.13px;white-space:pre;color:#5a5a5a">B0403</span></div>
<div class="cell" style="left:161.80px;width:100px;top:232.60px">点检</div>
<div class="ttag" style="left:254.10px;top:230.05px;width:25.2px;background:#e7faf0;border-color:#dcf7e8;color:#13c462">已维护</div>
<div class="cell" style="left:325.50px;width:100px;top:232.60px"><span style="display:inline-block;font-size:8.2px;transform:scaleX(0.82);margin:0 -0.41px;white-space:pre;color:#5a5a5a">0</span></div>
<div class="cell" style="left:397.55px;width:100px;top:232.60px"><span style="display:inline-block;font-size:8.2px;transform:scaleX(0.82);margin:0 -3.78px;white-space:pre;color:#5a5a5a">2023-08-30</span></div>
<div class="cell" style="left:483.00px;width:100px;top:232.60px"><span style="display:inline-block;font-size:8.2px;transform:scaleX(0.82);margin:0 -6.80px;white-space:pre;color:#5a5a5a">2023-09-11 09:47:27</span></div>
<div class="cell" style="left:551.15px;width:100px;top:232.60px">超级管理员</div>
<div class="cell" style="left:769.95px;width:100px;top:232.60px">未审核</div>
<div class="cell" style="left:824.35px;width:100px;top:232.60px">超级管理员</div>
<div class="cell" style="left:899.70px;width:100px;top:232.60px;color:#409EFF">维护&nbsp;&nbsp;完工</div>
<div class="cb" style="left:27.9px;top:251.78px;"></div>
<div class="cell" style="left:38.35px;width:100px;top:250.68px">数控车床<span style="display:inline-block;font-size:8.2px;transform:scaleX(0.82);margin:0 -3.02px;white-space:pre;color:#5a5a5a">CK61125</span></div>
<div class="cell" style="left:107.15px;width:100px;top:250.68px"><span style="display:inline-block;font-size:8.2px;transform:scaleX(0.82);margin:0 -2.13px;white-space:pre;color:#5a5a5a">A0213</span></div>
<div class="cell" style="left:161.80px;width:100px;top:250.68px">点检</div>
<div class="ttag" style="left:254.10px;top:248.13px;width:25.2px;background:#e7faf0;border-color:#dcf7e8;color:#13c462">已维护</div>
<div class="cell" style="left:325.50px;width:100px;top:250.68px"><span style="display:inline-block;font-size:8.2px;transform:scaleX(0.82);margin:0 -0.41px;white-space:pre;color:#5a5a5a">0</span></div>
<div class="cell" style="left:397.55px;width:100px;top:250.68px"><span style="display:inline-block;font-size:8.2px;transform:scaleX(0.82);margin:0 -3.78px;white-space:pre;color:#5a5a5a">2023-08-30</span></div>
<div class="cell" style="left:483.00px;width:100px;top:250.68px"><span style="display:inline-block;font-size:8.2px;transform:scaleX(0.82);margin:0 -6.80px;white-space:pre;color:#5a5a5a">2023-09-11 15:41:41</span></div>
<div class="cell" style="left:551.15px;width:100px;top:250.68px">超级管理员</div>
<div class="cell" style="left:769.95px;width:100px;top:250.68px">未审核</div>
<div class="cell" style="left:824.35px;width:100px;top:250.68px">超级管理员</div>
<div class="cell" style="left:899.70px;width:100px;top:250.68px;color:#409EFF">维护&nbsp;&nbsp;完工</div>
<div class="cb" style="left:27.9px;top:269.86px;background:#edf2fc;border-color:#e4e7ed"></div>
<div class="cell" style="left:38.35px;width:100px;top:268.76px">数控车床<span style="display:inline-block;font-size:8.2px;transform:scaleX(0.82);margin:0 -3.02px;white-space:pre;color:#5a5a5a">CK61125</span></div>
<div class="cell" style="left:107.15px;width:100px;top:268.76px"><span style="display:inline-block;font-size:8.2px;transform:scaleX(0.82);margin:0 -2.13px;white-space:pre;color:#5a5a5a">A0213</span></div>
<div class="cell" style="left:161.80px;width:100px;top:268.76px">点检</div>
<div class="ttag" style="left:251.10px;top:266.21px;width:31px;background:#fff8e6;border-color:#fff3d6;color:#f5a300">正在维护</div>
<div class="cell" style="left:325.50px;width:100px;top:268.76px"><span style="display:inline-block;font-size:8.2px;transform:scaleX(0.82);margin:0 -0.41px;white-space:pre;color:#5a5a5a">0</span></div>
<div class="cell" style="left:397.55px;width:100px;top:268.76px"><span style="display:inline-block;font-size:8.2px;transform:scaleX(0.82);margin:0 -3.78px;white-space:pre;color:#5a5a5a">2023-08-29</span></div>
<div class="cell" style="left:483.00px;width:100px;top:268.76px"><span style="display:inline-block;font-size:8.2px;transform:scaleX(0.82);margin:0 -6.85px;white-space:pre;color:#5a5a5a">2023-09-12 10:10:17</span></div>
<div class="cell" style="left:551.15px;width:100px;top:268.76px">超级管理员</div>
<div class="cell" style="left:769.95px;width:100px;top:268.76px">未审核</div>
<div class="cell" style="left:824.35px;width:100px;top:268.76px">超级管理员</div>
<div class="cell" style="left:899.70px;width:100px;top:268.76px;color:#409EFF">维护&nbsp;&nbsp;完工</div>
<div class="abs" style="left:686.2px;top:296px;font-size:5.8px;color:#606266;line-height:8px;white-space:nowrap">共 2418 条</div>
<div class="inp" style="left:720.4px;top:293.8px;width:44px;height:12.7px;color:#606266;line-height:11.7px;padding-left:8px;font-size:5.8px">10条/页</div>
<i class="abs" style="left:757px;top:297.6px;width:2.5px;height:2.5px;border-right:0.5px solid #c0c4cc;border-bottom:0.5px solid #c0c4cc;transform:rotate(45deg)"></i>
<div class="pg" style="left:773.1px;color:#c0c4cc;font-size:7px;font-weight:normal;">‹</div>
<div class="pg" style="left:790.7px;background:#1890ff;color:#fff;">1</div>
<div class="pg" style="left:808.7px;">2</div>
<div class="pg" style="left:826.3px;">3</div>
<div class="pg" style="left:843.7px;">4</div>
<div class="pg" style="left:861.4px;">5</div>
<div class="pg" style="left:879px;">6</div>
<div class="pg" style="left:896.8px;">···</div>
<div class="pg" style="left:914.4px;">242</div>
<div class="pg" style="left:932.2px;color:#606266;font-size:7px;font-weight:normal;">›</div>
<div class="abs" style="left:958.2px;top:296px;font-size:5.8px;color:#606266;line-height:8px;white-space:nowrap">前往</div>
<div class="inp" style="left:971.6px;top:293.7px;width:19.2px;height:12.6px;color:#606266;text-align:center;padding:0;font-size:5.8px">1</div>
<div class="abs" style="left:992.5px;top:296px;font-size:5.8px;color:#606266;line-height:8px;white-space:nowrap">页</div>
<div class="card" style="left:9.3px;top:318px;width:1000px;height:191.2px"></div>
<div class="abs" style="left:21px;top:325.7px;font-size:7.6px;font-weight:bold;color:#303133;line-height:10px">点检</div>
<svg class="abs" style="left:-98px;top:0" width="1092" height="523" viewBox="0 0 1092 523">
<line x1="211.9" y1="474.70" x2="214.9" y2="474.70" stroke="#6e7079" stroke-width="0.6"/>
<text x="210.90" y="476.60" font-size="6.20" fill="#555" text-anchor="end" textLength="2.95" lengthAdjust="spacingAndGlyphs">0</text>
<line x1="214.9" y1="454.10" x2="1000.7" y2="454.10" stroke="#e6e6e6" stroke-width="0.6"/>
<line x1="211.9" y1="454.10" x2="214.9" y2="454.10" stroke="#6e7079" stroke-width="0.6"/>
<text x="210.90" y="456.00" font-size="6.20" fill="#555" text-anchor="end" textLength="5.90" lengthAdjust="spacingAndGlyphs">20</text>
<line x1="214.9" y1="433.50" x2="1000.7" y2="433.50" stroke="#e6e6e6" stroke-width="0.6"/>
<line x1="211.9" y1="433.50" x2="214.9" y2="433.50" stroke="#6e7079" stroke-width="0.6"/>
<text x="210.90" y="435.40" font-size="6.20" fill="#555" text-anchor="end" textLength="5.90" lengthAdjust="spacingAndGlyphs">40</text>
<line x1="214.9" y1="412.90" x2="1000.7" y2="412.90" stroke="#e6e6e6" stroke-width="0.6"/>
<line x1="211.9" y1="412.90" x2="214.9" y2="412.90" stroke="#6e7079" stroke-width="0.6"/>
<text x="210.90" y="414.80" font-size="6.20" fill="#555" text-anchor="end" textLength="5.90" lengthAdjust="spacingAndGlyphs">60</text>
<line x1="214.9" y1="392.30" x2="1000.7" y2="392.30" stroke="#e6e6e6" stroke-width="0.6"/>
<line x1="211.9" y1="392.30" x2="214.9" y2="392.30" stroke="#6e7079" stroke-width="0.6"/>
<text x="210.90" y="394.20" font-size="6.20" fill="#555" text-anchor="end" textLength="5.90" lengthAdjust="spacingAndGlyphs">80</text>
<line x1="214.9" y1="371.70" x2="1000.7" y2="371.70" stroke="#e6e6e6" stroke-width="0.6"/>
<line x1="211.9" y1="371.70" x2="214.9" y2="371.70" stroke="#6e7079" stroke-width="0.6"/>
<text x="210.90" y="373.60" font-size="6.20" fill="#555" text-anchor="end" textLength="8.84" lengthAdjust="spacingAndGlyphs">100</text>
<line x1="214.9" y1="351.10" x2="1000.7" y2="351.10" stroke="#e6e6e6" stroke-width="0.6"/>
<line x1="211.9" y1="351.10" x2="214.9" y2="351.10" stroke="#6e7079" stroke-width="0.6"/>
<text x="210.90" y="353.00" font-size="6.20" fill="#555" text-anchor="end" textLength="8.84" lengthAdjust="spacingAndGlyphs">120</text>
<line x1="214.9" y1="351.10" x2="214.9" y2="474.70" stroke="#999" stroke-width="0.6"/>
<line x1="214.9" y1="474.70" x2="1000.7" y2="474.70" stroke="#999" stroke-width="0.6"/>
<text x="215.4" y="342.9" font-size="5.2" fill="#222" text-anchor="middle">数量</text>
<text x="1007.8" y="476.2" font-size="5.2" fill="#222">设备编号</text>
<rect x="216.95" y="473.67" width="16.05" height="1.03" fill="#c23531"/>
<text x="224.97" y="470.17" font-size="8.42" fill="#4a4a4a" text-anchor="middle" textLength="4.00" lengthAdjust="spacingAndGlyphs">1</text>
<rect x="237.10" y="472.64" width="16.05" height="2.06" fill="#c23531"/>
<text x="245.12" y="469.14" font-size="8.42" fill="#4a4a4a" text-anchor="middle" textLength="4.00" lengthAdjust="spacingAndGlyphs">2</text>
<rect x="257.25" y="439.68" width="16.05" height="35.02" fill="#d63a35"/>
<text x="265.27" y="436.18" font-size="8.42" fill="#4a4a4a" text-anchor="middle" textLength="8.01" lengthAdjust="spacingAndGlyphs">34</text>
<rect x="277.40" y="425.26" width="16.05" height="49.44" fill="#c23531"/>
<text x="285.42" y="421.76" font-size="8.42" fill="#4a4a4a" text-anchor="middle" textLength="8.01" lengthAdjust="spacingAndGlyphs">48</text>
<rect x="297.54" y="372.73" width="16.05" height="101.97" fill="#c23531"/>
<text x="305.57" y="369.23" font-size="8.42" fill="#4a4a4a" text-anchor="middle" textLength="8.01" lengthAdjust="spacingAndGlyphs">99</text>
<rect x="317.69" y="371.70" width="16.05" height="103.00" fill="#d63a35"/>
<text x="325.72" y="368.20" font-size="8.42" fill="#4a4a4a" text-anchor="middle" textLength="12.01" lengthAdjust="spacingAndGlyphs">100</text>
<rect x="337.84" y="378.91" width="16.05" height="95.79" fill="#c23531"/>
<text x="345.87" y="375.41" font-size="8.42" fill="#4a4a4a" text-anchor="middle" textLength="8.01" lengthAdjust="spacingAndGlyphs">93</text>
<rect x="357.99" y="366.55" width="16.05" height="108.15" fill="#c23531"/>
<text x="366.02" y="363.05" font-size="8.42" fill="#4a4a4a" text-anchor="middle" textLength="12.01" lengthAdjust="spacingAndGlyphs">105</text>
<rect x="378.14" y="411.87" width="16.05" height="62.83" fill="#c23531"/>
<text x="386.16" y="408.37" font-size="8.42" fill="#4a4a4a" text-anchor="middle" textLength="8.01" lengthAdjust="spacingAndGlyphs">61</text>
<rect x="398.29" y="405.69" width="16.05" height="69.01" fill="#c23531"/>
<text x="406.31" y="402.19" font-size="8.42" fill="#4a4a4a" text-anchor="middle" textLength="8.01" lengthAdjust="spacingAndGlyphs">67</text>
<rect x="418.44" y="473.67" width="16.05" height="1.03" fill="#c23531"/>
<text x="426.46" y="470.17" font-size="8.42" fill="#4a4a4a" text-anchor="middle" textLength="4.00" lengthAdjust="spacingAndGlyphs">1</text>
<rect x="438.59" y="472.64" width="16.05" height="2.06" fill="#c23531"/>
<text x="446.61" y="469.14" font-size="8.42" fill="#4a4a4a" text-anchor="middle" textLength="4.00" lengthAdjust="spacingAndGlyphs">2</text>
<rect x="458.73" y="401.57" width="16.05" height="73.13" fill="#c23531"/>
<text x="466.76" y="398.07" font-size="8.42" fill="#4a4a4a" text-anchor="middle" textLength="8.01" lengthAdjust="spacingAndGlyphs">71</text>
<rect x="478.88" y="383.03" width="16.05" height="91.67" fill="#c23531"/>
<text x="486.91" y="379.53" font-size="8.42" fill="#4a4a4a" text-anchor="middle" textLength="8.01" lengthAdjust="spacingAndGlyphs">89</text>
<rect x="499.03" y="365.52" width="16.05" height="109.18" fill="#c23531"/>
<text x="507.06" y="362.02" font-size="8.42" fill="#4a4a4a" text-anchor="middle" textLength="12.01" lengthAdjust="spacingAndGlyphs">106</text>
<rect x="519.18" y="377.88" width="16.05" height="96.82" fill="#c23531"/>
<text x="527.21" y="374.38" font-size="8.42" fill="#4a4a4a" text-anchor="middle" textLength="8.01" lengthAdjust="spacingAndGlyphs">94</text>
<rect x="539.33" y="380.97" width="16.05" height="93.73" fill="#c23531"/>
<text x="547.35" y="377.47" font-size="8.42" fill="#4a4a4a" text-anchor="middle" textLength="8.01" lengthAdjust="spacingAndGlyphs">91</text>
<rect x="559.48" y="375.82" width="16.05" height="98.88" fill="#c23531"/>
<text x="567.50" y="372.32" font-size="8.42" fill="#4a4a4a" text-anchor="middle" textLength="8.01" lengthAdjust="spacingAndGlyphs">96</text>
<rect x="579.63" y="409.81" width="16.05" height="64.89" fill="#c23531"/>
<text x="587.65" y="406.31" font-size="8.42" fill="#4a4a4a" text-anchor="middle" textLength="8.01" lengthAdjust="spacingAndGlyphs">63</text>
<rect x="599.78" y="403.63" width="16.05" height="71.07" fill="#c23531"/>
<text x="607.80" y="400.13" font-size="8.42" fill="#4a4a4a" text-anchor="middle" textLength="8.01" lengthAdjust="spacingAndGlyphs">69</text>
<rect x="619.92" y="393.33" width="16.05" height="81.37" fill="#c23531"/>
<text x="627.95" y="389.83" font-size="8.42" fill="#4a4a4a" text-anchor="middle" textLength="8.01" lengthAdjust="spacingAndGlyphs">79</text>
<rect x="640.07" y="373.76" width="16.05" height="100.94" fill="#c23531"/>
<text x="648.10" y="370.26" font-size="8.42" fill="#4a4a4a" text-anchor="middle" textLength="8.01" lengthAdjust="spacingAndGlyphs">98</text>
<rect x="660.22" y="473.67" width="16.05" height="1.03" fill="#c23531"/>
<text x="668.25" y="470.17" font-size="8.42" fill="#4a4a4a" text-anchor="middle" textLength="4.00" lengthAdjust="spacingAndGlyphs">1</text>
<rect x="680.37" y="473.67" width="16.05" height="1.03" fill="#c23531"/>
<text x="688.39" y="470.17" font-size="8.42" fill="#4a4a4a" text-anchor="middle" textLength="4.00" lengthAdjust="spacingAndGlyphs">1</text>
<rect x="700.52" y="473.67" width="16.05" height="1.03" fill="#c23531"/>
<text x="708.54" y="470.17" font-size="8.42" fill="#4a4a4a" text-anchor="middle" textLength="4.00" lengthAdjust="spacingAndGlyphs">1</text>
<rect x="720.67" y="473.67" width="16.05" height="1.03" fill="#c23531"/>
<text x="728.69" y="470.17" font-size="8.42" fill="#4a4a4a" text-anchor="middle" textLength="4.00" lengthAdjust="spacingAndGlyphs">1</text>
<rect x="740.82" y="362.43" width="16.05" height="112.27" fill="#c23531"/>
<text x="748.84" y="358.93" font-size="8.42" fill="#4a4a4a" text-anchor="middle" textLength="12.01" lengthAdjust="spacingAndGlyphs">109</text>
<rect x="760.97" y="363.46" width="16.05" height="111.24" fill="#c23531"/>
<text x="768.99" y="359.96" font-size="8.42" fill="#4a4a4a" text-anchor="middle" textLength="12.01" lengthAdjust="spacingAndGlyphs">108</text>
<rect x="781.11" y="362.43" width="16.05" height="112.27" fill="#c23531"/>
<text x="789.14" y="358.93" font-size="8.42" fill="#4a4a4a" text-anchor="middle" textLength="12.01" lengthAdjust="spacingAndGlyphs">109</text>
<rect x="801.26" y="473.67" width="16.05" height="1.03" fill="#c23531"/>
<text x="809.29" y="470.17" font-size="8.42" fill="#4a4a4a" text-anchor="middle" textLength="4.00" lengthAdjust="spacingAndGlyphs">1</text>
<rect x="821.41" y="374.79" width="16.05" height="99.91" fill="#c23531"/>
<text x="829.44" y="371.29" font-size="8.42" fill="#4a4a4a" text-anchor="middle" textLength="8.01" lengthAdjust="spacingAndGlyphs">97</text>
<rect x="841.56" y="412.90" width="16.05" height="61.80" fill="#c23531"/>
<text x="849.58" y="409.40" font-size="8.42" fill="#4a4a4a" text-anchor="middle" textLength="8.01" lengthAdjust="spacingAndGlyphs">60</text>
<rect x="861.71" y="378.91" width="16.05" height="95.79" fill="#c23531"/>
<text x="869.73" y="375.41" font-size="8.42" fill="#4a4a4a" text-anchor="middle" textLength="8.01" lengthAdjust="spacingAndGlyphs">93</text>
<rect x="881.86" y="380.97" width="16.05" height="93.73" fill="#c23531"/>
<text x="889.88" y="377.47" font-size="8.42" fill="#4a4a4a" text-anchor="middle" textLength="8.01" lengthAdjust="spacingAndGlyphs">91</text>
<rect x="902.01" y="385.09" width="16.05" height="89.61" fill="#c23531"/>
<text x="910.03" y="381.59" font-size="8.42" fill="#4a4a4a" text-anchor="middle" textLength="8.01" lengthAdjust="spacingAndGlyphs">87</text>
<rect x="922.16" y="402.60" width="16.05" height="72.10" fill="#c23531"/>
<text x="930.18" y="399.10" font-size="8.42" fill="#4a4a4a" text-anchor="middle" textLength="8.01" lengthAdjust="spacingAndGlyphs">70</text>
<rect x="942.30" y="469.55" width="16.05" height="5.15" fill="#c23531"/>
<text x="950.33" y="466.05" font-size="8.42" fill="#4a4a4a" text-anchor="middle" textLength="4.00" lengthAdjust="spacingAndGlyphs">5</text>
<rect x="962.45" y="412.90" width="16.05" height="61.80" fill="#c23531"/>
<text x="970.48" y="409.40" font-size="8.42" fill="#4a4a4a" text-anchor="middle" textLength="8.01" lengthAdjust="spacingAndGlyphs">60</text>
<rect x="982.60" y="422.17" width="16.05" height="52.53" fill="#c23531"/>
<text x="990.63" y="418.67" font-size="8.42" fill="#4a4a4a" text-anchor="middle" textLength="8.01" lengthAdjust="spacingAndGlyphs">51</text>
<text x="224.97" y="482.00" font-size="6.20" fill="#555" text-anchor="middle" textLength="15.33" lengthAdjust="spacingAndGlyphs">A0101</text>
<line x1="214.90" y1="474.7" x2="214.90" y2="477.2" stroke="#6e7079" stroke-width="0.6"/>
<text x="265.27" y="482.00" font-size="6.20" fill="#555" text-anchor="middle" textLength="15.33" lengthAdjust="spacingAndGlyphs">A0202</text>
<line x1="255.20" y1="474.7" x2="255.20" y2="477.2" stroke="#6e7079" stroke-width="0.6"/>
<text x="305.57" y="482.00" font-size="6.20" fill="#555" text-anchor="middle" textLength="15.33" lengthAdjust="spacingAndGlyphs">A0210</text>
<line x1="295.49" y1="474.7" x2="295.49" y2="477.2" stroke="#6e7079" stroke-width="0.6"/>
<text x="345.87" y="482.00" font-size="6.20" fill="#555" text-anchor="middle" textLength="15.33" lengthAdjust="spacingAndGlyphs">A0212</text>
<line x1="335.79" y1="474.7" x2="335.79" y2="477.2" stroke="#6e7079" stroke-width="0.6"/>
<text x="386.16" y="482.00" font-size="6.20" fill="#555" text-anchor="middle" textLength="15.33" lengthAdjust="spacingAndGlyphs">A0214</text>
<line x1="376.09" y1="474.7" x2="376.09" y2="477.2" stroke="#6e7079" stroke-width="0.6"/>
<text x="426.46" y="482.00" font-size="6.20" fill="#555" text-anchor="middle" textLength="15.33" lengthAdjust="spacingAndGlyphs">A0301</text>
<line x1="416.39" y1="474.7" x2="416.39" y2="477.2" stroke="#6e7079" stroke-width="0.6"/>
<text x="466.76" y="482.00" font-size="6.20" fill="#555" text-anchor="middle" textLength="15.33" lengthAdjust="spacingAndGlyphs">A0802</text>
<line x1="456.68" y1="474.7" x2="456.68" y2="477.2" stroke="#6e7079" stroke-width="0.6"/>
<text x="507.06" y="482.00" font-size="6.20" fill="#555" text-anchor="middle" textLength="15.33" lengthAdjust="spacingAndGlyphs">A0804</text>
<line x1="496.98" y1="474.7" x2="496.98" y2="477.2" stroke="#6e7079" stroke-width="0.6"/>
<text x="547.35" y="482.00" font-size="6.20" fill="#555" text-anchor="middle" textLength="15.33" lengthAdjust="spacingAndGlyphs">A0806</text>
<line x1="537.28" y1="474.7" x2="537.28" y2="477.2" stroke="#6e7079" stroke-width="0.6"/>
<text x="587.65" y="482.00" font-size="6.20" fill="#555" text-anchor="middle" textLength="15.33" lengthAdjust="spacingAndGlyphs">A0808</text>
<line x1="577.58" y1="474.7" x2="577.58" y2="477.2" stroke="#6e7079" stroke-width="0.6"/>
<text x="627.95" y="482.00" font-size="6.20" fill="#555" text-anchor="middle" textLength="15.33" lengthAdjust="spacingAndGlyphs">A0810</text>
<line x1="617.87" y1="474.7" x2="617.87" y2="477.2" stroke="#6e7079" stroke-width="0.6"/>
<text x="668.25" y="482.00" font-size="6.20" fill="#555" text-anchor="middle" textLength="15.33" lengthAdjust="spacingAndGlyphs">A0902</text>
<line x1="658.17" y1="474.7" x2="658.17" y2="477.2" stroke="#6e7079" stroke-width="0.6"/>
<text x="708.54" y="482.00" font-size="6.20" fill="#555" text-anchor="middle" textLength="15.33" lengthAdjust="spacingAndGlyphs">B0101</text>
<line x1="698.47" y1="474.7" x2="698.47" y2="477.2" stroke="#6e7079" stroke-width="0.6"/>
<text x="748.84" y="482.00" font-size="6.20" fill="#555" text-anchor="middle" textLength="15.33" lengthAdjust="spacingAndGlyphs">B0201</text>
<line x1="738.77" y1="474.7" x2="738.77" y2="477.2" stroke="#6e7079" stroke-width="0.6"/>
<text x="789.14" y="482.00" font-size="6.20" fill="#555" text-anchor="middle" textLength="15.33" lengthAdjust="spacingAndGlyphs">B0210</text>
<line x1="779.06" y1="474.7" x2="779.06" y2="477.2" stroke="#6e7079" stroke-width="0.6"/>
<text x="829.44" y="482.00" font-size="6.20" fill="#555" text-anchor="middle" textLength="15.33" lengthAdjust="spacingAndGlyphs">B0404</text>
<line x1="819.36" y1="474.7" x2="819.36" y2="477.2" stroke="#6e7079" stroke-width="0.6"/>
<text x="869.73" y="482.00" font-size="6.20" fill="#555" text-anchor="middle" textLength="15.33" lengthAdjust="spacingAndGlyphs">B0406</text>
<line x1="859.66" y1="474.7" x2="859.66" y2="477.2" stroke="#6e7079" stroke-width="0.6"/>
<text x="910.03" y="482.00" font-size="6.20" fill="#555" text-anchor="middle" textLength="15.62" lengthAdjust="spacingAndGlyphs">D0103</text>
<line x1="899.96" y1="474.7" x2="899.96" y2="477.2" stroke="#6e7079" stroke-width="0.6"/>
<text x="950.33" y="482.00" font-size="6.20" fill="#555" text-anchor="middle" textLength="15.62" lengthAdjust="spacingAndGlyphs">D0401</text>
<line x1="940.25" y1="474.7" x2="940.25" y2="477.2" stroke="#6e7079" stroke-width="0.6"/>
<text x="990.63" y="482.00" font-size="6.20" fill="#555" text-anchor="middle" textLength="15.62" lengthAdjust="spacingAndGlyphs">D0501</text>
<line x1="980.55" y1="474.7" x2="980.55" y2="477.2" stroke="#6e7079" stroke-width="0.6"/>
<line x1="1000.7" y1="474.7" x2="1000.7" y2="477.2" stroke="#6e7079" stroke-width="0.6"/>
<rect x="214.9" y="485" width="787.80" height="12.8" fill="#dee4ed"/>
<polygon points="214.9,497.8 214.90,496.22 235.63,496.15 256.36,493.71 277.09,492.64 297.83,488.76 318.56,488.69 339.29,489.22 360.02,488.30 380.75,491.66 401.48,491.20 422.22,496.22 442.95,496.15 463.68,490.89 484.41,489.52 505.14,488.23 525.87,489.14 546.61,489.37 567.34,488.99 588.07,491.50 608.80,491.05 629.53,490.28 650.26,488.84 670.99,496.22 691.73,496.22 712.46,496.22 733.19,496.22 753.92,488.00 774.65,488.08 795.38,488.00 816.12,496.22 836.85,488.91 857.58,491.73 878.31,489.22 899.04,489.37 919.77,489.68 940.51,490.97 961.24,495.92 981.97,491.73 1002.70,492.42 1002.7,497.8" fill="#d2d9e4"/>
<polyline points="214.90,496.22 235.63,496.15 256.36,493.71 277.09,492.64 297.83,488.76 318.56,488.69 339.29,489.22 360.02,488.30 380.75,491.66 401.48,491.20 422.22,496.22 442.95,496.15 463.68,490.89 484.41,489.52 505.14,488.23 525.87,489.14 546.61,489.37 567.34,488.99 588.07,491.50 608.80,491.05 629.53,490.28 650.26,488.84 670.99,496.22 691.73,496.22 712.46,496.22 733.19,496.22 753.92,488.00 774.65,488.08 795.38,488.00 816.12,496.22 836.85,488.91 857.58,491.73 878.31,489.22 899.04,489.37 919.77,489.68 940.51,490.97 961.24,495.92 981.97,491.73 1002.70,492.42" fill="none" stroke="#c5cdd9" stroke-width="0.5"/>
<line x1="215.20000000000002" y1="485" x2="215.20000000000002" y2="497.8" stroke="#b8c6da" stroke-width="0.6"/>
<line x1="1002.4000000000001" y1="485" x2="1002.4000000000001" y2="497.8" stroke="#b8c6da" stroke-width="0.6"/>
<rect x="214.60" y="488.4" width="3.2" height="6.1" rx="0.6" fill="#d5deea" stroke="#9fb2cf" stroke-width="0.45"/>
<path d="M215.30 490.3h1.8M215.30 491.5h1.8M215.30 492.7h1.8" stroke="#9fb2cf" stroke-width="0.35"/>
<rect x="999.80" y="488.4" width="3.2" height="6.1" rx="0.6" fill="#d5deea" stroke="#9fb2cf" stroke-width="0.45"/>
<path d="M1000.50 490.3h1.8M1000.50 491.5h1.8M1000.50 492.7h1.8" stroke="#9fb2cf" stroke-width="0.35"/>
</svg>
<div class="card" style="left:9.3px;top:515.6px;width:1000px;height:30px"></div>
<div class="abs" style="left:45px;top:521.8px;width:93px;height:1.2px;background:#e9ebef"></div>
<div class="abs" style="left:618px;top:521.8px;width:255px;height:1.2px;background:#eceef1"></div>
</div>
</body></html>
